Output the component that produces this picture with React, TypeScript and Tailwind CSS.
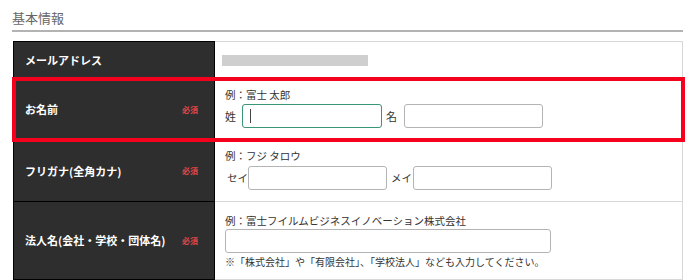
const jp = "font-['Noto_Sans_CJK_JP','Noto_Sans',sans-serif]";

const Required = () => (
  <span className="ml-auto mr-[16px] text-[8px] font-bold text-[#e2464b] leading-none">必須</span>
);

const Label = ({ children, required = false }: { children: React.ReactNode; required?: boolean }) => (
  <div className="w-[202px] shrink-0 flex items-center bg-[#2e2e2e] border-x border-b border-black pl-[11px]">
    <span className="text-[11px] font-bold text-white leading-none">{children}</span>
    {required && <Required />}
  </div>
);

const Field = ({ w, focused = false }: { w: string; focused?: boolean }) => (
  <div
    className={`${w} h-[24px] rounded-[3px] bg-white flex items-center pl-[7px] ${
      focused ? 'border-[1.5px] border-[#3a9478]' : 'border-[1.5px] border-[#b4b4b4]'
    }`}
  >
    {focused && <div className="w-[1px] h-[14px] bg-[#444]" />}
  </div>
);

const Hint = ({ children }: { children: React.ReactNode }) => (
  <p className="text-[10.5px] text-[#333] leading-[12px]">{children}</p>
);

export default function App() {
  return (
    <div className={`w-[700px] h-[280px] overflow-hidden bg-white ${jp}`}>
      <div className="pl-[13px] pr-[17px] pt-[10px]">
        <h2 className="text-[13px] text-[#666] leading-[16px] pb-[4px] border-b-2 border-[#b3b3b3] -ml-[1px]">
          基本情報
        </h2>

        <div className="mt-[9px]">
          {/* メールアドレス */}
          <div className="flex h-[38px]">
            <div className="w-[202px] shrink-0 flex items-center bg-[#2e2e2e] border border-black pl-[11px]">
              <span className="text-[11px] font-bold text-white leading-none">メールアドレス</span>
            </div>
            <div className="flex-1 flex items-center pl-[7px] border-t border-r border-[#d8d8d8]">
              <div className="w-[146px] h-[11px] bg-[#cfcfcf]" />
            </div>
          </div>

          {/* お名前 */}
          <div className="relative flex h-[62px]">
            <Label required>お名前</Label>
            <div className="flex-1 flex flex-col pl-[10px] pt-[10px] gap-[3px] border-r border-b border-[#d8d8d8]">
              <Hint>例：富士 太郎</Hint>
              <div className="flex items-center">
                <span className="text-[11px] text-[#333] w-[17px]">姓</span>
                <Field w="w-[140px]" focused />
                <span className="text-[11px] text-[#333] ml-[4px] w-[18px]">名</span>
                <Field w="w-[139px]" />
              </div>
            </div>
            <div className="absolute -left-[1px] -right-[2px] -top-[2px] -bottom-[1px] border-4 border-[#f5001d] pointer-events-none" />
          </div>

          {/* フリガナ */}
          <div className="flex h-[61px]">
            <Label required>フリガナ(全角カナ)</Label>
            <div className="flex-1 flex flex-col pl-[10px] pt-[9px] gap-[4px] border-r border-b border-[#d8d8d8]">
              <Hint>例：フジ タロウ</Hint>
              <div className="flex items-center">
                <span className="text-[10.5px] text-[#333] w-[23px] pl-[2px] whitespace-nowrap">セイ</span>
                <Field w="w-[139px]" />
                <span className="text-[10.5px] text-[#333] ml-[4px] w-[22px] whitespace-nowrap">メイ</span>
                <Field w="w-[139px]" />
              </div>
            </div>
          </div>

          {/* 法人名 */}
          <div className="flex h-[78px]">
            <Label required>法人名(会社・学校・団体名)</Label>
            <div className="flex-1 flex flex-col pl-[10px] pt-[13px] border-r border-b border-[#d8d8d8]">
              <Hint>例：富士フイルムビジネスイノベーション株式会社</Hint>
              <div className="mt-[2px]">
                <Field w="w-[326px]" />
              </div>
              <p className="mt-[3px] text-[10px] text-[#333] leading-[12px]">
                ※「株式会社」や「有限会社」、「学校法人」なども入力してください。
              </p>
            </div>
          </div>
        </div>
      </div>
    </div>
  );
}
